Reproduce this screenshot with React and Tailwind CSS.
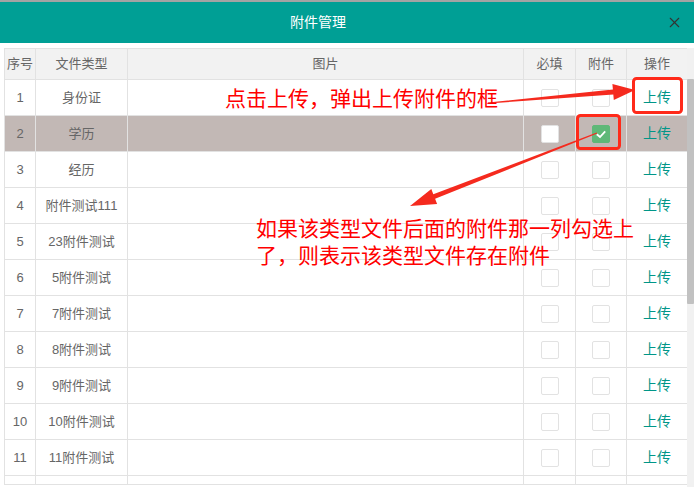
import React from 'react';
import { X } from 'lucide-react';

const rows = [
  { no: 1, type: '身份证' },
  { no: 2, type: '学历', selected: true, checked: true },
  { no: 3, type: '经历' },
  { no: 4, type: '附件测试111' },
  { no: 5, type: '23附件测试' },
  { no: 6, type: '5附件测试' },
  { no: 7, type: '7附件测试' },
  { no: 8, type: '8附件测试' },
  { no: 9, type: '9附件测试' },
  { no: 10, type: '10附件测试' },
  { no: 11, type: '11附件测试' },
  // 第 12 行只露出顶边
  { no: '', type: '', blank: true },
];

const Checkbox = ({ checked }) => (
  <div
    className={`w-[18px] h-[18px] rounded-[2px] mx-auto flex items-center justify-center ${
      checked ? 'bg-[#5fb878] border border-[#5fb878]' : 'bg-white border border-[#e2e2e2]'
    }`}
  >
    {checked && (
      <svg width="14" height="14" viewBox="0 0 14 14">
        <path d="M2.8 7.2 L6 10 L11.2 4.3" fill="none" stroke="white" strokeWidth="1.8" />
      </svg>
    )}
  </div>
);

export default function App() {
  return (
    <div className="relative w-[694px] h-[487px] overflow-hidden bg-white font-['Liberation_Sans','Noto_Sans_CJK_SC',sans-serif]">
      <div className="h-[2px] bg-[#a3a3a3]" />

      {/* 标题栏 */}
      <div className="relative h-[41px] bg-[#009f95] flex items-center justify-center pr-[58px]">
        <span className="text-[14px] text-white">附件管理</span>
        <X size={17} strokeWidth={1.6} className="absolute right-[11px] top-[12px] text-[#333]" />
      </div>

      {/* 表格 */}
      <div className="flex pt-[5px] pl-[4px]">
        <div className="w-[683px] h-[437px] overflow-hidden border-b border-[#e2e2e2]">
          <table className="table-fixed border-collapse w-[683px] text-[13px] text-[#666]">
            <colgroup>
              <col className="w-[31px]" />
              <col className="w-[92px]" />
              <col className="w-[396px]" />
              <col className="w-[52px]" />
              <col className="w-[51px]" />
              <col className="w-[61px]" />
            </colgroup>
            <thead>
              <tr className="h-[31px] bg-[#f2f2f2]">
                {['序号', '文件类型', '图片', '必填', '附件', '操作'].map((h) => (
                  <th key={h} className="border border-[#e2e2e2] font-normal text-center p-0">{h}</th>
                ))}
              </tr>
            </thead>
            <tbody>
              {rows.map((r, i) => (
                <tr key={i} className={`h-[36px] ${r.selected ? 'bg-[#c2b8b5]' : 'bg-white'}`}>
                  <td className="border border-[#e2e2e2] text-center p-0">{r.no}</td>
                  <td className="border border-[#e2e2e2] text-center p-0">{r.type}</td>
                  <td className="border border-[#e2e2e2] p-0"></td>
                  <td className="border border-[#e2e2e2] p-0">
                    <Checkbox />
                  </td>
                  <td className="border border-[#e2e2e2] p-0">
                    <Checkbox checked={r.checked} />
                  </td>
                  <td className="border border-[#e2e2e2] text-center p-0 text-[14px] text-[#009688]">
                    {r.blank ? '' : '上传'}
                  </td>
                </tr>
              ))}
            </tbody>
          </table>
        </div>

        {/* 滚动条 */}
        <div className="w-[7px] h-[440px] bg-[#f1f1f1] flex flex-col">
          <div className="h-[31px]" />
          <div className="h-[225px] bg-[#c1c1c1] rounded-[1px]" />
        </div>
      </div>

      {/* 标注 */}
      <svg className="absolute left-0 top-0 pointer-events-none" width="694" height="487">
        <rect x="633.5" y="78.5" width="48" height="34" rx="3" fill="none" stroke="#ff2a1a" strokeWidth="3" />
        <rect x="577.5" y="115.5" width="42" height="33" rx="3" fill="none" stroke="#ff2a1a" strokeWidth="3" />
        <polygon
          fill="#f52a1e"
          points="488,102.5 612.9,89.4 612.4,83.9 635,90 613.8,99.9 613.3,94.4 488,103.5"
        />
        <polygon
          fill="#f52a1e"
          points="597.2,133.5 435.1,198.8 437.1,204 410,206 431.3,189 433.3,194.2 596.8,132.5"
        />
      </svg>
      <div className="absolute left-[225px] top-[84px] text-[21px] leading-[26px] text-[#ff0000] whitespace-nowrap font-['Noto_Sans_CJK_SC',sans-serif]">
        点击上传，弹出上传附件的框
      </div>
      <div className="absolute left-[256px] top-[214px] text-[21px] leading-[27px] text-[#ff0000] whitespace-nowrap font-['Noto_Sans_CJK_SC',sans-serif]">
        <div>如果该类型文件后面的附件那一列勾选上</div>
        <div>了，则表示该类型文件存在附件</div>
      </div>
    </div>
  );
}
